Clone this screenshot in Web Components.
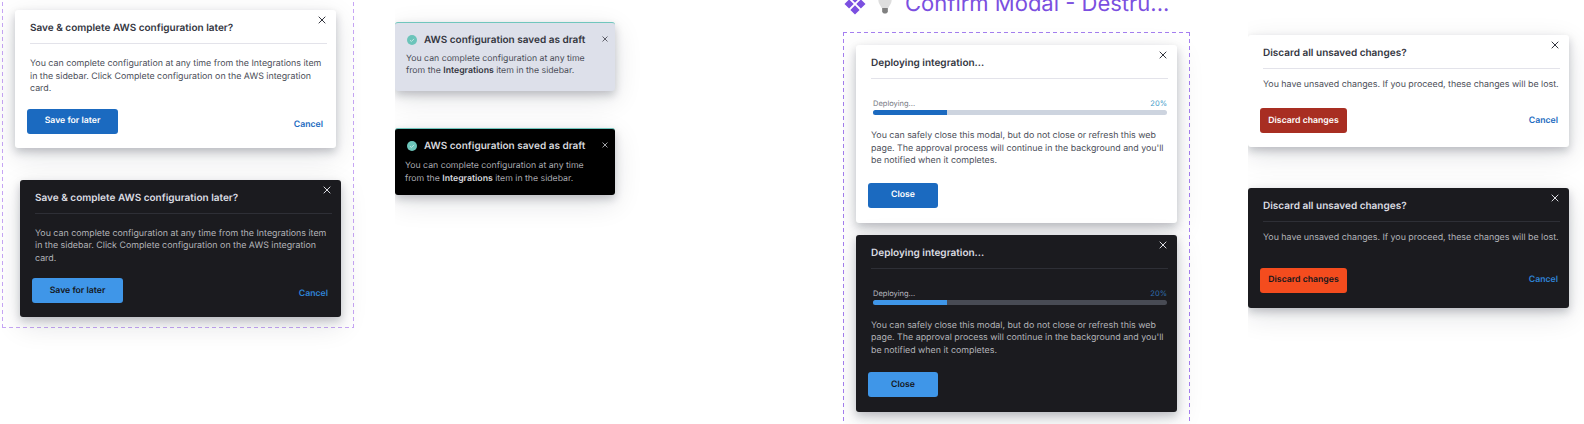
<!DOCTYPE html>
<html>
<head>
<meta charset="utf-8">
<style>
html, body { margin: 0; height: 424px; overflow: hidden; background: #fff; }
body {
  display: grid;
  grid-template-columns: 395px 448px 405px 1fr;
  font-family: Inter, "Liberation Sans", sans-serif;
  text-rendering: geometricPrecision;
}
.col { display: flex; flex-direction: column; align-items: flex-start; height: 424px; overflow: hidden; }
.c1 { padding-left: 2px; }
.c2 { padding-top: 22px; gap: 37px; }
.c4 { padding-top: 35px; gap: 41px; }
</style>
</head>
<body>
<template id="x-close">
  <svg width="8" height="8" viewBox="0 0 8 8" fill="none" stroke="currentColor" stroke-width="1"><path d="M.7.7l6.600 6.600M7.300.7L.7 7.300"/></svg>
</template>

<div class="col c1">
  <dash-frame style="--top:-12px;--w:352px;--h:340px;--pt:22px;--gap:32px;--dash:#c7a6f5">
    <app-modal style="--ml:13px;--bw:91px;--act:13px" cancel>
      <span slot="title">Save &amp; complete AWS configuration later?</span>
      You can complete configuration at any time from the Integrations item in the sidebar. Click Complete configuration on the AWS integration card.
      <span slot="action">Save for later</span>
    </app-modal>
    <app-modal dark style="--ml:18px;--bw:91px;--act:13px" cancel>
      <span slot="title">Save &amp; complete AWS configuration later?</span>
      You can complete configuration at any time from the Integrations item in the sidebar. Click Complete configuration on the AWS integration card.
      <span slot="action">Save for later</span>
    </app-modal>
  </dash-frame>
</div>

<div class="col c2">
  <app-toast>
    <span slot="title">AWS configuration saved as draft</span>
    You can complete configuration at any time<br>from the <b>Integrations</b> item in the sidebar.
  </app-toast>
  <app-toast dark>
    <span slot="title">AWS configuration saved as draft</span>
    You can complete configuration at any time<br>from the <b>Integrations</b> item in the sidebar.
  </app-toast>
</div>

<div class="col c3">
  <page-heading>Confirm Modal - Destru...</page-heading>
  <dash-frame style="--top:15px;--w:347px;--h:420px;--pt:13px;--gap:12px;--dash:#a57ff0">
    <app-modal style="--ml:13px;--bw:70px;--act:15px;--tm:15px;--pb:15px">
      <span slot="title">Deploying integration...</span>
      <progress-row slot="progress" value="25">Deploying...</progress-row>
      You can safely close this modal, but do not close or refresh this web page. The approval process will continue in the background and you'll be notified when it completes.
      <span slot="action">Close</span>
    </app-modal>
    <app-modal dark style="--ml:13px;--bw:70px;--act:15px;--tm:15px;--pb:15px">
      <span slot="title">Deploying integration...</span>
      <progress-row slot="progress" value="25">Deploying...</progress-row>
      You can safely close this modal, but do not close or refresh this web page. The approval process will continue in the background and you'll be notified when it completes.
      <span slot="action">Close</span>
    </app-modal>
  </dash-frame>
</div>

<div class="col c4">
  <app-modal danger cancel style="--bw:87px;--act:16.5px;--tm:10px">
    <span slot="title">Discard all unsaved changes?</span>
    You have unsaved changes. If you proceed, these changes will be lost.
    <span slot="action">Discard changes</span>
  </app-modal>
  <app-modal danger dark cancel style="--bw:87px;--act:23px;--tm:10px;--pb:15px">
    <span slot="title">Discard all unsaved changes?</span>
    You have unsaved changes. If you proceed, these changes will be lost.
    <span slot="action">Discard changes</span>
  </app-modal>
</div>

<script>
var closeIcon = document.getElementById('x-close').innerHTML;

class DashFrame extends HTMLElement {
  constructor() {
    super();
    this.attachShadow({ mode: 'open' }).innerHTML = `<style>
:host {
  display: flex;
  flex-direction: column;
  align-items: flex-start;
  gap: var(--gap);
  box-sizing: border-box;
  flex: none;
  margin-top: var(--top);
  width: var(--w);
  height: var(--h);
  padding-top: var(--pt);
  --h-dash: repeating-linear-gradient(90deg, var(--dash) 0 4px, transparent 4px 7px);
  --v-dash: repeating-linear-gradient(180deg, var(--dash) 0 4px, transparent 4px 7px);
  background:
    var(--h-dash) 0 0 / 100% 1px no-repeat,
    var(--h-dash) 0 100% / 100% 1px no-repeat,
    var(--v-dash) 0 0 / 1px 100% no-repeat,
    var(--v-dash) 100% 0 / 1px 100% no-repeat;
}
</style><slot></slot>`;
  }
}

class AppModal extends HTMLElement {
  constructor() {
    super();
    this.attachShadow({ mode: 'open' }).innerHTML = `<style>
:host {
  display: block;
  position: relative;
  box-sizing: border-box;
  flex: none;
  width: 321px;
  margin-left: var(--ml, 0);
  padding: 10px 9px var(--pb, 14px) 15px;
  border-radius: 3px;
  background: #fff;
  color: #4a4d57;
  box-shadow: 0 4px 8px rgba(20,24,40,.22), 0 8px 28px rgba(20,24,40,.12);
  --title: #34363f;
  --line: #e3e3ea;
  --btn: #1b6ac0;
  --btn-text: #fff;
  --cancel: #1b6ac0;
}
:host([dark]) {
  background: #1b1b1f;
  color: #b4b5ba;
  --title: #dcdde2;
  --line: #2e2f36;
  --btn: #3f96e8;
  --btn-text: #14161c;
  --cancel: #2f83d6;
}
:host([danger]) { --btn: #a82e22; }
:host([danger][dark]) { --btn: #f44c1e; --btn-text: #14161c; }
.title {
  font-size: 10px;
  font-weight: 600;
  line-height: 16px;
  color: var(--title);
  padding-bottom: 7px;
  border-bottom: 1px solid var(--line);
}
.close {
  position: absolute;
  top: 6px;
  right: 10px;
  display: flex;
  color: var(--title);
}
.text {
  font-size: 8.85px;
  line-height: 12.5px;
  margin-top: var(--tm, 14px);
}
.actions {
  display: flex;
  align-items: flex-end;
  justify-content: space-between;
  margin: var(--act) 4px 0 -3px;
}
:host([danger]) .actions { align-items: center; margin-right: 2px; }
.btn {
  box-sizing: border-box;
  width: var(--bw);
  height: 25px;
  display: flex;
  align-items: center;
  justify-content: center;
  border-radius: 3px;
  background: var(--btn);
  color: var(--btn-text);
  font-size: 8.7px;
  font-weight: 600;
}
.cancel {
  display: none;
  font-size: 8.7px;
  font-weight: 600;
  line-height: 14px;
  color: var(--cancel);
  padding-bottom: 2px;
}
:host([danger]) .cancel { padding-bottom: 0; }
:host([cancel]) .cancel { display: block; }
</style>
<div class="title"><slot name="title"></slot></div>
<div class="close">${closeIcon}</div>
<slot name="progress"></slot>
<div class="text"><slot></slot></div>
<div class="actions">
  <div class="btn"><slot name="action"></slot></div>
  <div class="cancel">Cancel</div>
</div>`;
  }
}

class ProgressRow extends HTMLElement {
  constructor() {
    super();
    let value = this.getAttribute('value');
    this.attachShadow({ mode: 'open' }).innerHTML = `<style>
:host {
  display: block;
  margin: 20px 1px 0 2px;
  --track: #cdd4df;
  --fill: #1b6ac0;
  --pct: #3c9ac8;
  --lab: #777a84;
}
:host-context(app-modal[dark]) {
  --track: #484b54;
  --fill: #3f96e8;
  --pct: #2f6fb0;
  --lab: #b9bac0;
}
.row { display: flex; justify-content: space-between; font-size: 7.5px; line-height: 10px; color: var(--lab); }
.pct { color: var(--pct); }
.track { height: 5px; margin-top: 1px; border-radius: 3px; background: var(--track); overflow: hidden; }
.fill { height: 100%; width: ${value}%; background: var(--fill); }
</style>
<div class="row"><slot></slot><span class="pct">20%</span></div>
<div class="track"><div class="fill"></div></div>`;
  }
}

class AppToast extends HTMLElement {
  constructor() {
    super();
    this.attachShadow({ mode: 'open' }).innerHTML = `<style>
:host {
  display: block;
  position: relative;
  box-sizing: border-box;
  width: 220px;
  height: 69px;
  padding: 9px 20px 0 11px;
  border-top: 1px solid #70c6bd;
  border-radius: 3px;
  background: #dde0ea;
  color: #4a4d57;
  box-shadow: 0 4px 8px rgba(20,24,40,.22), 0 8px 28px rgba(20,24,40,.12);
  --title: #34363f;
  --strong: #34363f;
  --tm: 4.5px;
  --tl: 0;
}
:host([dark]) {
  height: 67px;
  background: #000;
  color: #a9aab0;
  --title: #d6d7dc;
  --strong: #d6d7dc;
  --tm: 6px;
  --tl: -1px;
}
.head { display: flex; align-items: center; gap: 7px; padding-left: 1px; margin-right: -10px; font-size: 10px; font-weight: 600; line-height: 16px; color: var(--title); }
.text { font-size: 8.72px; line-height: 12.5px; margin: var(--tm) 0 0 var(--tl); }
::slotted(b) { font-weight: 600; color: var(--strong); }
.close { position: absolute; top: 13px; right: 7px; display: flex; color: var(--title); }
.close svg { width: 6px; height: 6px; }
</style>
<div class="head">
  <svg width="10" height="10" viewBox="0 0 10 10"><circle cx="5" cy="5" r="5" fill="#6cc4ba"/><path d="M3 5.200l1.400 1.300L7 3.900" fill="none" stroke="#d6efeb" stroke-width=".8"/></svg>
  <slot name="title"></slot>
</div>
<div class="text"><slot></slot></div>
<div class="close">${closeIcon}</div>`;
  }
}

class PageHeading extends HTMLElement {
  constructor() {
    super();
    this.attachShadow({ mode: 'open' }).innerHTML = `<style>
:host {
  display: flex;
  align-items: center;
  flex: none;
  height: 17px;
  color: #7b4fe0;
  font-size: 22px;
  line-height: 26px;
  white-space: nowrap;
}
.row { display: flex; align-items: center; height: 26px; gap: 10px; margin-top: -9px; }
.bulb { margin-right: 2px; }
</style>
<div class="row">
  <svg width="24" height="24" viewBox="0 0 24 24" fill="#7b4fe0"><path d="M12 1.500l4.600 4.600L12 10.700 7.400 6.100zM12 13.300l4.600 4.600-4.600 4.600-4.600-4.600zM6.100 7.400l4.600 4.600-4.600 4.600L1.500 12zM17.900 7.400l4.600 4.600-4.600 4.600-4.600-4.600z"/></svg>
  <svg class="bulb" width="16" height="24" viewBox="0 0 18 24"><path d="M9 1C4.400 1 1.500 4.400 1.500 8c0 3.500 2.800 5.500 3.800 8.500h7.400c1-3 3.800-5 3.800-8.500C16.500 4.400 13.600 1 9 1z" fill="#dedede"/><path d="M5.800 16.500h6.400v4.500l-1.800 1.800H7.600L5.800 21z" fill="#808080"/></svg>
  <span><slot></slot></span>
</div>`;
  }
}

customElements.define('dash-frame', DashFrame);
customElements.define('app-modal', AppModal);
customElements.define('progress-row', ProgressRow);
customElements.define('app-toast', AppToast);
customElements.define('page-heading', PageHeading);
</script>
</body>
</html>
